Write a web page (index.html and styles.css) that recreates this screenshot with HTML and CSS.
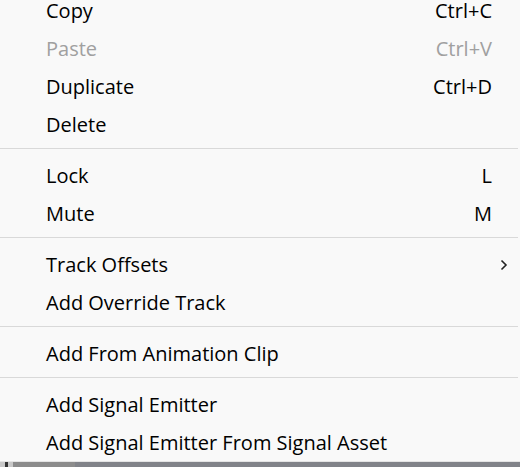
FILE: index.html
```html
<!DOCTYPE html>
<html>
<head>
<meta charset="utf-8">
<link rel="stylesheet" href="styles.css">
</head>
<body>
<div class="menu">
  <div class="item first"><span class="label">Copy</span><span class="key">Ctrl+C</span></div>
  <div class="item disabled"><span class="label">Paste</span><span class="key">Ctrl+V</span></div>
  <div class="item"><span class="label">Duplicate</span><span class="key">Ctrl+D</span></div>
  <div class="item"><span class="label">Delete</span></div>
  <div class="sep"></div>
  <div class="item"><span class="label">Lock</span><span class="key">L</span></div>
  <div class="item"><span class="label">Mute</span><span class="key">M</span></div>
  <div class="sep"></div>
  <div class="item sub"><span class="label">Track Offsets</span><svg class="arrow" width="8" height="12" viewBox="0 0 8 12"><path d="M1.5 1.5 L6 6 L1.5 10.5" fill="none" stroke="#222" stroke-width="1.6"/></svg></div>
  <div class="item"><span class="label">Add Override Track</span></div>
  <div class="sep"></div>
  <div class="item"><span class="label">Add From Animation Clip</span></div>
  <div class="sep"></div>
  <div class="item"><span class="label">Add Signal Emitter</span></div>
  <div class="item"><span class="label">Add Signal Emitter From Signal Asset</span></div>
</div>
<div class="bottom">
  <div class="seg s1"></div><div class="seg s2"></div><div class="seg s3"></div><div class="seg s4"></div><div class="seg s5"></div>
</div>
</body>
</html>
```
FILE: styles.css
```css
html, body {
  margin: 0;
  padding: 0;
  background: #f9f9f9;
  overflow: hidden;
}
body {
  width: 520px;
  height: 467px;
  font-family: "Open Sans", "Noto Sans", sans-serif;
  font-size: 20px;
  color: #000;
}
.menu {
  background: #f9f9f9;
}
.item {
  height: 38px;
  line-height: 38px;
  display: flex;
  align-items: center;
  padding-left: 46px;
  padding-right: 28px;
}
.item.first {
  height: 29px;
  padding-top: 1px;
  line-height: 20px;
  align-items: flex-start;
}
.label {
  flex: 1;
}
.key {
  text-align: right;
}
.disabled {
  color: #a0a0a0;
}
.sub {
  padding-right: 12px;
}
.arrow {
  display: block;
}
.sep {
  height: 1px;
  background: #d9d9d9;
  margin: 4px 2px 8px 0;
}
.bottom {
  position: absolute;
  left: 0;
  top: 461px;
  width: 520px;
  height: 6px;
  border-top: 1px solid #e4e4e4;
  display: flex;
  box-sizing: border-box;
}
.seg { height: 100%; }
.s1 { width: 5px; background: #c8c8c8; }
.s2 { width: 3px; background: #333; }
.s3 { width: 5px; background: #c8c8c8; }
.s4 { width: 62px; background: #8c8c8c; }
.s5 { flex: 1; background: #818389; }
```
